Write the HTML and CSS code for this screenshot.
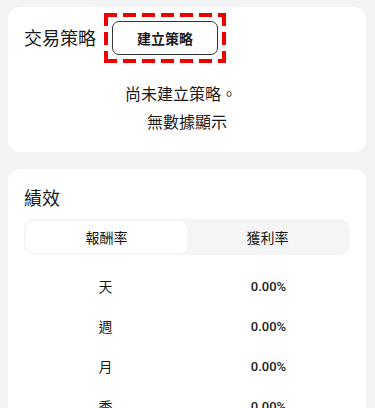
FILE: index.html
```html
<!DOCTYPE html>
<html lang="zh-Hant">
<head>
<meta charset="utf-8">
<link rel="stylesheet" href="styles.css">
</head>
<body>
<div class="page">
  <section class="card strategy">
    <div class="strategy-head">
      <h2 class="card-title head-title">交易策略</h2>
      <div class="highlight">
        <button class="create-btn" type="button">建立策略</button>
      </div>
    </div>
    <div class="empty">
      <p class="empty-main">尚未建立策略。</p>
      <p class="empty-sub">無數據顯示</p>
    </div>
  </section>
  <section class="card perf">
    <h2 class="card-title">績效</h2>
    <div class="seg">
      <div class="seg-tab active">報酬率</div>
      <div class="seg-tab">獲利率</div>
    </div>
    <div class="rows">
      <div class="row"><span class="label">天</span><span class="value">0.00%</span></div>
      <div class="row"><span class="label">週</span><span class="value">0.00%</span></div>
      <div class="row"><span class="label">月</span><span class="value">0.00%</span></div>
      <div class="row"><span class="label">季</span><span class="value">0.00%</span></div>
    </div>
  </section>
</div>
</body>
</html>
```

FILE: styles.css
```css
html, body {
  margin: 0;
  padding: 0;
  background: #f2f3f5;
}
body {
  font-family: Roboto, "Noto Sans CJK TC", sans-serif;
  color: #1a1a1a;
  overflow: hidden;
}
.page {
  padding: 7px 9px 0 8px;
  display: flex;
  flex-direction: column;
  gap: 17px;
}
.card {
  background: #fff;
  border-radius: 12px;
}
.card-title {
  margin: 0;
  font-size: 18px;
  font-weight: 400;
  line-height: 26px;
  font-family: "Noto Sans CJK TC", sans-serif;
}
.strategy {
  padding: 6px 16px 18px;
}
.strategy-head {
  display: flex;
  align-items: center;
  gap: 8px;
  height: 50px;
}
.head-title {
  padding-bottom: 3px;
}
.highlight {
  padding: 8px;
  display: flex;
  background:
    repeating-linear-gradient(90deg, #f00000 0 13px, transparent 13px 19px) left top / 100% 4px no-repeat,
    repeating-linear-gradient(90deg, #f00000 0 13px, transparent 13px 19px) left bottom / 100% 4px no-repeat,
    repeating-linear-gradient(180deg, #f00000 0 13px, transparent 13px 19px) left top / 4px 100% no-repeat,
    repeating-linear-gradient(180deg, #f00000 0 13px, transparent 13px 19px) right top / 4px 100% no-repeat;
}
.create-btn {
  height: 34px;
  width: 106px;
  padding: 0;
  background: #fff;
  border: 1px solid #333;
  border-radius: 7px;
  font-family: "Noto Sans CJK TC", sans-serif;
  font-size: 14px;
  font-weight: 700;
  color: #1a1a1a;
}
.empty {
  margin-top: 17px;
  text-align: center;
  font-family: "Noto Sans CJK TC", sans-serif;
}
.empty p {
  margin: 0;
  font-size: 16px;
  line-height: 26px;
}
.empty-main {
  padding-right: 12px;
}
.empty-sub {
  margin-top: 2px !important;
}
.perf {
  padding: 15px 16px 20px;
}
.seg {
  margin-top: 9px;
  background: #f5f5f6;
  border-radius: 10px;
  padding: 2px;
  display: grid;
  grid-template-columns: 1fr 1fr;
}
.seg-tab {
  height: 32px;
  display: flex;
  align-items: center;
  justify-content: center;
  font-family: "Noto Sans CJK TC", sans-serif;
  font-size: 14px;
  border-radius: 8px;
  color: #1a1a1a;
}
.seg-tab.active {
  background: #fff;
}
.rows {
  margin-top: 11px;
}
.row {
  height: 40px;
  display: grid;
  grid-template-columns: 1fr 1fr;
  align-items: center;
  justify-items: center;
}
.label {
  font-family: "Noto Sans CJK TC", sans-serif;
  font-size: 14px;
}
.value {
  font-family: Roboto, sans-serif;
  font-size: 13px;
  font-weight: 500;
  color: #222;
}
```
